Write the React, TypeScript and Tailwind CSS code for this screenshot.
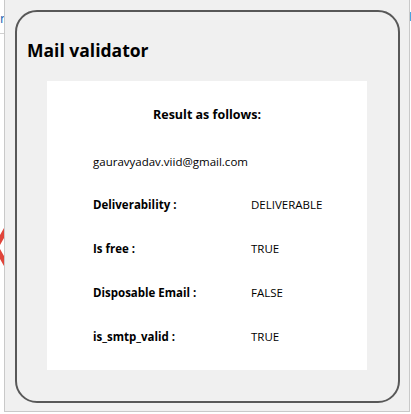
export default function App() {
  const rows = [
    { label: "Deliverability :", value: "DELIVERABLE" },
    { label: "Is free :", value: "TRUE" },
    { label: "Disposable Email :", value: "FALSE" },
    { label: "is_smtp_valid :", value: "TRUE" },
  ];

  return (
    <div className="relative h-[414px] w-[411px] overflow-hidden bg-white font-['Open_Sans',sans-serif] text-black">
      {/* bits of the page behind the popup */}
      <div className="absolute left-0 top-[12px] text-[13px] leading-none text-[#1a5fb4]">n</div>
      <div className="absolute left-0 top-[33px] h-px w-[4px] bg-[#d0d0d0]" />
      <svg className="absolute left-0 top-[224px]" width="6" height="46" viewBox="0 0 6 46">
        <polyline points="8,2 -4,23 8,44" fill="none" stroke="#e0443a" strokeWidth="5" />
      </svg>
      <div className="absolute right-0 top-[12px] h-[9px] w-[2px] bg-[#4aa3df]" />

      {/* popup */}
      <div className="absolute left-[4px] top-0 h-[412px] w-[406px] border border-t-0 border-[#c9c9c9] bg-[#f0f0f0] pl-[10px] pt-[10px]">
        <div className="flex h-[393px] w-[385px] flex-col rounded-[22px] border-2 border-[#585858]">
          <h1 className="mt-[26px] pl-[10px] text-[17.5px] font-bold leading-[24px]">Mail validator</h1>
          <div className="ml-[30px] mt-[19px] flex h-[289px] w-[320px] flex-col bg-white text-[11.5px]">
            <div className="mt-[25px] text-center text-[12.5px] font-bold">Result as follows:</div>
            <div className="mt-[28px] pl-[46px]">gauravyadav.viid@gmail.com</div>
            <div className="mt-[26px] flex flex-col gap-[26.5px]">
              {rows.map((r) => (
                <div key={r.label} className="flex h-[17.5px] items-center">
                  <div className="w-[204px] pl-[46px] font-bold">{r.label}</div>
                  <div>{r.value}</div>
                </div>
              ))}
            </div>
          </div>
        </div>
      </div>
    </div>
  );
}
